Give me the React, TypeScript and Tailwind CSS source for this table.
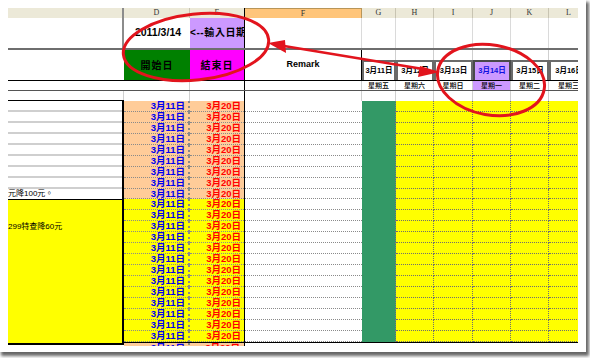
import React from 'react';

const days = [
  { w: 'w-[34px]', col: 'G', date: '3月11日', day: '星期五', hi: false },
  { w: 'w-[38px]', col: 'H', date: '3月12日', day: '星期六', hi: false },
  { w: 'w-[39px]', col: 'I', date: '3月13日', day: '星期日', hi: false },
  { w: 'w-[38px]', col: 'J', date: '3月14日', day: '星期一', hi: true },
  { w: 'w-[38px]', col: 'K', date: '3月15日', day: '星期二', hi: false },
  { w: 'w-[40px]', col: 'L', date: '3月16日', day: '星期三', hi: false },
];

const ROWS: ('orange' | 'yellow')[] = [
  ...Array(9).fill('orange'),
  ...Array(13).fill('yellow'),
];

// every row is a flex strip of fixed-width cells; none of them may shrink
const strip = 'flex shrink-0 [&>*]:shrink-0';

const HeaderBand = () => (
  <div className={`${strip} h-[10px] bg-[#ECE9D8] font-['Liberation_Serif',serif] text-[8px] leading-[10px] text-[#333]`}>
    <div className="w-[66px] border-r border-[#C8C4B2] text-center">D</div>
    <div className="w-[55px] border-r border-black text-center">E</div>
    <div className="w-[117px] bg-[#FFC57A] border-r border-t border-[#B89558] text-center">F</div>
    {days.map((d) => (
      <div key={d.col} className={`${d.w} border-r border-[#C8C4B2] text-center`}>
        {d.col}
      </div>
    ))}
  </div>
);

const DataRow = ({ tone }: { tone: 'orange' | 'yellow' }) => {
  const bg = tone === 'orange' ? 'bg-[#FFCC99]' : 'bg-[#FFFF00]';
  return (
    <div className={`${strip} h-[10.95px] text-[9.5px] font-bold leading-[10px]`}>
      <div className={`w-[66px] ${bg} border-r-2 border-b border-dotted border-[#8a8a8a] text-right pr-[3px] text-[#0000F0]`}>
        3月11日
      </div>
      <div className={`w-[54px] ${bg} border-b border-dotted border-[#8a8a8a] text-right pr-[3px] text-[#FF0000]`}>
        3月20日
      </div>
      <div className="w-px bg-black" />
      <div className="w-[117px] border-b border-dotted border-[#8a8a8a] bg-white" />
      <div className="w-[34px] bg-[#339966] border-r border-dotted border-[#7a7a7a]" />
      {days.slice(1).map((d) => (
        <div key={d.col} className={`${d.w} bg-[#FFFF00] border-r border-b border-dotted border-[#6f6f6f]`} />
      ))}
    </div>
  );
};

const LeftPane = () => (
  <div className="w-[116px] shrink-0 flex flex-col text-[8px] leading-[10.95px] text-black">
    <div className="h-[10px] shrink-0 bg-[#ECE9D8] border-r-2 border-[#8c8c8c]" />
    <div className="h-[30px] shrink-0 bg-white border-r-2 border-[#8c8c8c]" />
    <div className="h-[2px] shrink-0 bg-[#6e6e6e]" />
    <div className="h-[31px] shrink-0 bg-white border-b border-black" />
    <div className="h-[10px] shrink-0 bg-white border-b border-[#555]" />
    <div className="h-[9px] shrink-0 bg-white border-r border-[#d0d0d0]" />
    <div className="shrink-0 border-t border-r-2 border-black bg-white">
      {Array.from({ length: 9 }).map((_, i) => (
        <div
          key={i}
          className={`h-[10.95px] whitespace-nowrap ${i < 8 ? 'border-b-2 border-[#cfcfcf]' : ''}`}
        >
          {i === 8 ? '元降100元。' : ''}
        </div>
      ))}
    </div>
    <div className="h-[145.35px] shrink-0 bg-[#FFFF00] border-t border-r-2 border-b-2 border-black pt-[21.9px] whitespace-nowrap">
      299特查降60元
    </div>
  </div>
);

const RightPane = () => (
  <div className="flex flex-col w-[470px] shrink-0">
    <HeaderBand />

    <div className={`${strip} h-[30px]`}>
      <div className="w-[66px] bg-white flex items-center justify-center font-['Liberation_Sans',sans-serif] text-[10.5px] font-bold pl-[2px] pb-[1px]">
        2011/3/14
      </div>
      <div className="w-[55px] bg-[#CC99FF] border-r border-black overflow-hidden whitespace-nowrap text-[10px] font-bold leading-[30px] tracking-[0.6px]">
        {'<--輸入日期'}
      </div>
      <div className="w-[117px] bg-white border-r border-[#dadada]" />
      {days.map((d) => (
        <div key={d.col} className={`${d.w} bg-white border-r border-[#dadada]`} />
      ))}
    </div>

    <div className="h-[2px] shrink-0 bg-[#6e6e6e]" />

    <div className={`${strip} h-[31px] border-b border-black`}>
      <div className="w-[66px] bg-[#008000] flex items-center justify-center text-[10px] font-bold tracking-[1px] text-black">
        開始日
      </div>
      <div className="w-[55px] bg-[#FF00FF] border-r border-black flex items-center justify-center text-[10px] font-bold tracking-[1px] text-black">
        結束日
      </div>
      <div className="w-[117px] bg-white border-r border-black flex items-center justify-center text-[9px] font-bold">
        Remark
      </div>
      <div className="flex flex-col">
        <div className={`${strip} h-[10px]`}>
          {days.map((d) => (
            <div key={d.col} className={`${d.w} border-r border-[#cfcfcf]`} />
          ))}
        </div>
        <div className={`${strip} h-[20px]`}>
          {days.map((d) => (
            <div
              key={d.col}
              className={`${d.w} border-2 border-b-0 flex items-center justify-center whitespace-nowrap overflow-hidden text-[7.5px] font-bold ${
                d.hi ? 'bg-[#CC99FF] border-[#4a4a4a] text-[#1010E0]' : 'bg-white border-[#6a6a6a] text-black'
              }`}
            >
              {d.date}
            </div>
          ))}
        </div>
      </div>
    </div>

    <div className={`${strip} h-[10px] border-b border-[#555] text-[7px] leading-[9px] font-medium text-black`}>
      <div className="w-[66px] bg-white border-r border-[#d0d0d0]" />
      <div className="w-[55px] bg-white border-r border-black" />
      <div className="w-[117px] bg-white border-r border-[#d0d0d0]" />
      {days.map((d) => (
        <div
          key={d.col}
          className={`${d.w} border-r border-[#cfcfcf] text-center whitespace-nowrap overflow-hidden ${
            d.hi ? 'bg-[#CC99FF]' : 'bg-white'
          }`}
        >
          {d.day}
        </div>
      ))}
    </div>

    <div className={`${strip} h-[10px]`}>
      <div className="w-[66px] bg-white border-r border-[#d0d0d0]" />
      <div className="w-[55px] bg-white border-r border-black" />
      <div className="w-[117px] bg-white border-r border-[#d0d0d0]" />
      {days.map((d) => (
        <div key={d.col} className={`${d.w} bg-white border-r border-[#cfcfcf]`} />
      ))}
    </div>

    {ROWS.map((tone, i) => (
      <DataRow key={i} tone={tone} />
    ))}

    <div className={`${strip} h-[8px] text-[9.5px] font-bold leading-[10px] border-t border-black`}>
      <div className="w-[66px] bg-[#FFCC99] border-r-2 border-dotted border-[#8a8a8a] text-right pr-[3px] text-[#0000F0]">
        3月11日
      </div>
      <div className="w-[55px] bg-[#FFCC99] border-r border-black text-right pr-[4px] text-[#FF0000]">
        3月20日
      </div>
    </div>
  </div>
);

const Annotations = () => (
  <svg className="absolute inset-0 pointer-events-none" width="590" height="358" viewBox="0 0 590 358">
    <g fill="none" stroke="#E2141D" strokeWidth="3">
      <ellipse cx="196" cy="47" rx="73" ry="33" transform="rotate(-6 196 47)" />
      <ellipse cx="491" cy="80" rx="54" ry="35" transform="rotate(10 491 80)" />
      <line x1="284" y1="46" x2="423" y2="69" strokeWidth="2.6" />
    </g>
    <g fill="#E2141D">
      <polygon points="268,43 285,40 286,53" />
      <polygon points="440,72 420,66 418,77" />
    </g>
  </svg>
);

export default function App() {
  return (
    <div className="relative w-[590px] h-[358px] bg-white overflow-hidden font-['Liberation_Sans','Noto_Sans_CJK_TC',sans-serif]">
      <div className="w-[586px] h-[352px] bg-white shadow-[2px_3px_3px_1px_rgba(0,0,0,0.6)] pl-2 pt-2">
        <div className="w-[570px] h-[338px] overflow-hidden flex">
          <LeftPane />
          <RightPane />
        </div>
      </div>
      <Annotations />
    </div>
  );
}
